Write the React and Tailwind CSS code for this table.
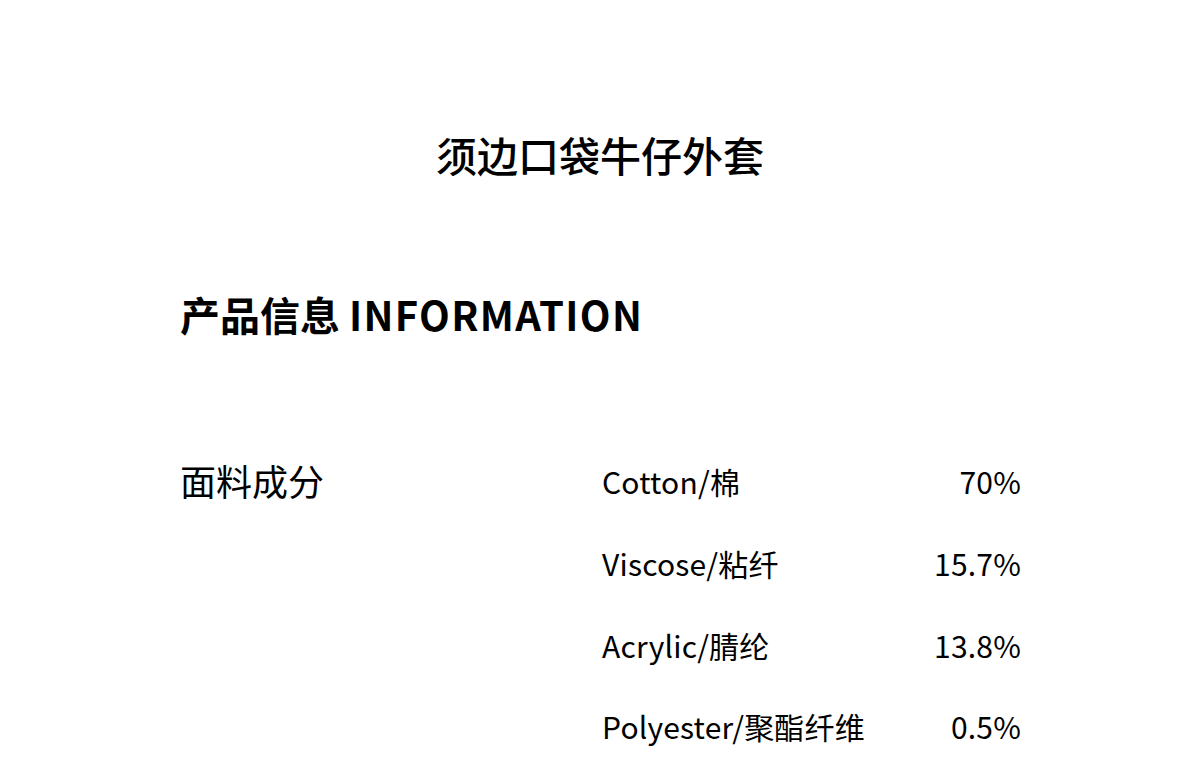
import React from 'react';

const rows = [
    { name: 'Cotton/棉', value: '70%' },
    { name: 'Viscose/粘纤', value: '15.7%' },
    { name: 'Acrylic/腈纶', value: '13.8%' },
    { name: 'Polyester/聚酯纤维', value: '0.5%' },
];

function App() {
    return (
        <div className="min-h-screen w-full bg-white text-black" style={{ fontFamily: '"Noto Sans CJK SC", "Noto Sans", sans-serif' }}>
            <div className="pt-[133px]">
                <h1 className="text-center text-[41px] leading-[42px] font-medium">须边口袋牛仔外套</h1>
            </div>

            <div className="pl-[180px] pr-[179px]">
                <h2 className="mt-[119px] text-[40px] leading-[40px] font-bold">
                    产品信息 <span className="tracking-[1.3px]">INFORMATION</span>
                </h2>

                {/* composition table */}
                <div className="mt-[107px] flex">
                    <div className="w-[422px] shrink-0">
                        <div className="h-[78px] flex items-center text-[36px]">面料成分</div>
                    </div>
                    <div className="w-[419px] flex flex-col">
                        {rows.map((r) => (
                            <div key={r.name} className="h-[81.7px] flex items-center justify-between text-[30px] tracking-[0.2px]">
                                <span>{r.name}</span>
                                <span>{r.value}</span>
                            </div>
                        ))}
                    </div>
                </div>
            </div>
        </div>
    );
}

export default App;
